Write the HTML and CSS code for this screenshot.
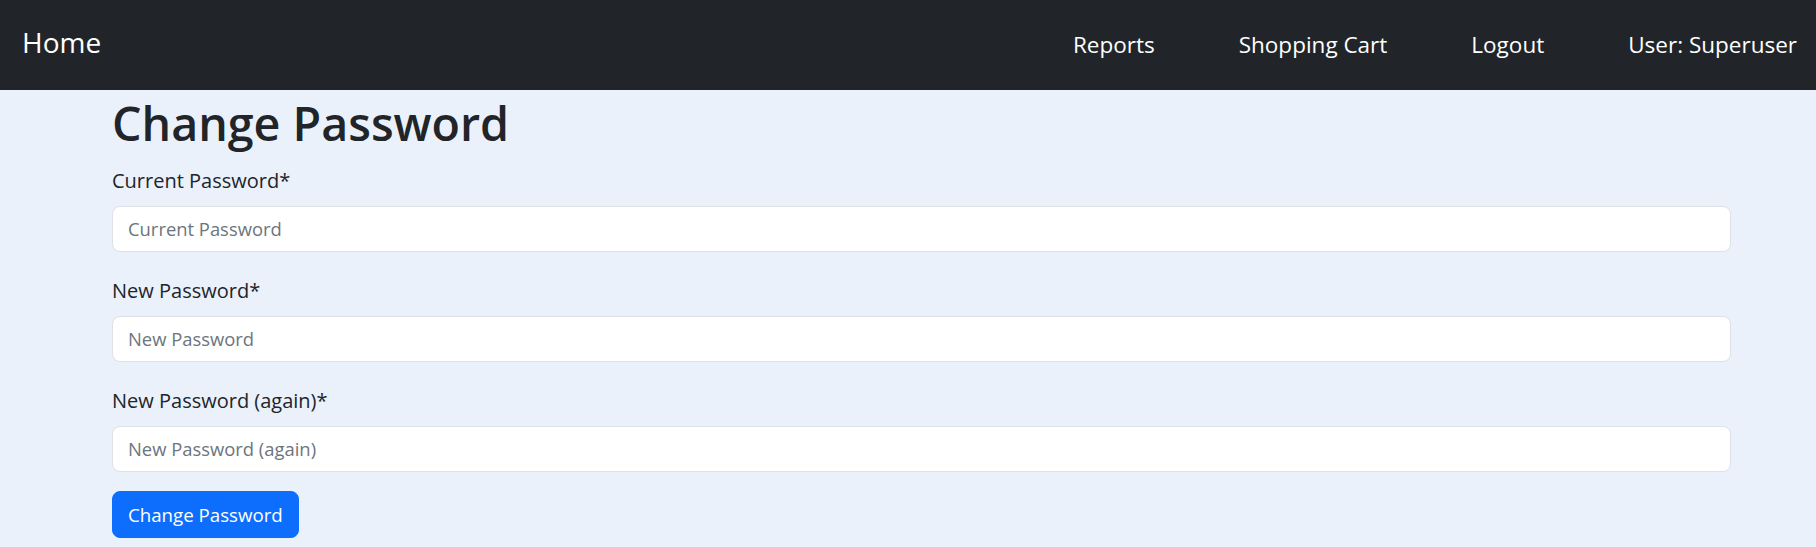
FILE: index.html
```html
<!DOCTYPE html>
<html lang="en">
<head>
<meta charset="utf-8">
<title>Change Password</title>
<link rel="stylesheet" href="styles.css">
</head>
<body>
<nav class="navbar">
  <a class="brand" href="#">Home</a>
  <ul class="nav-links">
    <li><a href="#">Reports</a></li>
    <li><a href="#">Shopping Cart</a></li>
    <li><a href="#">Logout</a></li>
    <li><a href="#">User: Superuser</a></li>
  </ul>
</nav>
<main class="content">
  <h1 class="title">Change Password</h1>
  <form class="form">
    <div class="field">
      <label class="label" for="cur">Current Password*</label>
      <input class="input" id="cur" type="password" placeholder="Current Password">
    </div>
    <div class="field">
      <label class="label" for="new1">New Password*</label>
      <input class="input" id="new1" type="password" placeholder="New Password">
    </div>
    <div class="field">
      <label class="label" for="new2">New Password (again)*</label>
      <input class="input" id="new2" type="password" placeholder="New Password (again)">
    </div>
    <div class="actions">
      <button class="btn" type="button">Change Password</button>
    </div>
  </form>
</main>
</body>
</html>
```
FILE: styles.css
```css
* { box-sizing: border-box; }
html, body {
  margin: 0;
  padding: 0;
}
body {
  background: #eaf1fb;
  color: #212529;
  font-family: "Open Sans", "Noto Sans", "Liberation Sans", sans-serif;
  font-size: 20px;
  height: 547px;
  overflow: hidden;
}
.navbar {
  height: 90px;
  background: #212529;
  display: flex;
  align-items: center;
  padding: 0 19px 0 22px;
}
.brand {
  color: #ffffff;
  text-decoration: none;
  font-size: 28px;
  line-height: 1;
  margin-top: -6px;
}
.nav-links {
  list-style: none;
  margin: 0 0 0 auto;
  padding: 0;
  display: flex;
  gap: 84px;
}
.nav-links a {
  color: #ffffff;
  text-decoration: none;
  font-size: 22.5px;
  line-height: 1;
}
.content {
  padding: 0 85px 0 112px;
}
.title {
  margin: 0;
  padding-top: 6px;
  font-size: 46.6px;
  font-weight: 600;
  line-height: 1.2;
}
.form {
  display: flex;
  flex-direction: column;
  gap: 24px;
  margin-top: 14px;
}
.field {
  display: flex;
  flex-direction: column;
  gap: 10px;
}
.label {
  font-size: 20px;
  line-height: 1.5;
}
.input {
  height: 46px;
  border: 1px solid #dee2e6;
  border-radius: 8px;
  background: #ffffff;
  padding: 0 15px;
  font-family: inherit;
  font-size: 18.4px;
  color: #212529;
}
.input::placeholder { color: #6c757d; }
.actions { margin-top: -5px; }
.btn {
  height: 47px;
  padding: 0 15px;
  background: #0d6efd;
  color: #ffffff;
  border: 1px solid #0d6efd;
  border-radius: 8px;
  font-family: inherit;
  font-size: 18.7px;
}
```
